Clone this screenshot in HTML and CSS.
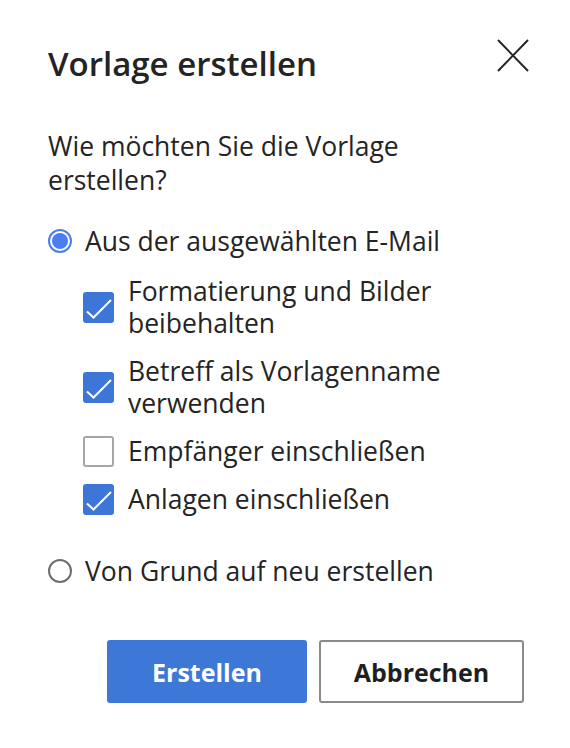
FILE: index.html
```html
<!DOCTYPE html>
<html lang="de">
<head>
<meta charset="utf-8">
<link rel="stylesheet" href="styles.css">
</head>
<body>
<div class="dialog">
  <div class="header">
    <h1 class="title">Vorlage erstellen</h1>
    <button class="close" aria-label="Schließen">
      <svg width="32" height="33" viewBox="0 0 32 33"><path d="M1 1 L31 32 M31 1 L1 32" stroke="#242424" stroke-width="2" fill="none"/></svg>
    </button>
  </div>
  <p class="question">Wie möchten Sie die Vorlage erstellen?</p>
  <div class="options">
    <div class="radio-row">
      <span class="radio checked"><span class="dot"></span></span>
      <span class="label">Aus der ausgewählten E-Mail</span>
    </div>
    <div class="checks">
      <div class="check-row">
        <span class="box checked"><svg width="31" height="31" viewBox="0 0 31 31"><path d="M4 19.5 L10.5 25.5 L28 8" stroke="#fff" stroke-width="2" fill="none"/></svg></span>
        <span class="label">Formatierung und Bilder beibehalten</span>
      </div>
      <div class="check-row">
        <span class="box checked"><svg width="31" height="31" viewBox="0 0 31 31"><path d="M4 19.5 L10.5 25.5 L28 8" stroke="#fff" stroke-width="2" fill="none"/></svg></span>
        <span class="label">Betreff als Vorlagenname verwenden</span>
      </div>
      <div class="check-row">
        <span class="box"></span>
        <span class="label">Empfänger einschließen</span>
      </div>
      <div class="check-row">
        <span class="box checked"><svg width="31" height="31" viewBox="0 0 31 31"><path d="M4 19.5 L10.5 25.5 L28 8" stroke="#fff" stroke-width="2" fill="none"/></svg></span>
        <span class="label">Anlagen einschließen</span>
      </div>
    </div>
    <div class="radio-row second">
      <span class="radio"></span>
      <span class="label">Von Grund auf neu erstellen</span>
    </div>
  </div>
  <div class="actions">
    <button class="btn primary">Erstellen</button>
    <button class="btn secondary">Abbrechen</button>
  </div>
</div>
</body>
</html>
```
FILE: styles.css
```css
html, body {
  margin: 0;
  padding: 0;
  background: #ffffff;
}
body {
  font-family: "Open Sans", "Noto Sans", sans-serif;
  color: #242424;
}
.dialog {
  width: 570px;
  box-sizing: border-box;
  padding: 44px 41px 0 48px;
}
.header {
  display: flex;
  justify-content: space-between;
  align-items: flex-start;
}
.title {
  margin: 0;
  font-size: 33px;
  line-height: 40px;
  font-weight: 600;
}
.close {
  margin-top: -5px;
  border: 0;
  background: none;
  padding: 0;
  width: 32px;
  height: 33px;
  display: block;
}
.close svg { display: block; }
.question {
  margin: 45px 0 0;
  font-size: 26.5px;
  line-height: 34px;
  width: 400px;
}
.options {
  margin-top: 27px;
}
.radio-row {
  display: flex;
  align-items: center;
  gap: 13px;
  height: 34px;
}
.radio-row .label {
  font-size: 26.5px;
  line-height: 34px;
  white-space: nowrap;
}
.radio-row.second {
  margin-top: 39px;
}
.radio {
  width: 24px;
  height: 24px;
  box-sizing: border-box;
  border-radius: 50%;
  border: 2px solid #6e6e6e;
  display: flex;
  align-items: center;
  justify-content: center;
  flex: none;
}
.radio.checked {
  border-color: #4a7cf3;
}
.radio .dot {
  width: 16px;
  height: 16px;
  border-radius: 50%;
  background: #4a7cf3;
}
.checks {
  margin-top: 17px;
  padding-left: 35px;
  display: flex;
  flex-direction: column;
  gap: 16px;
}
.check-row {
  display: flex;
  align-items: center;
  gap: 14px;
}
.check-row .label {
  font-size: 26.5px;
  line-height: 32px;
  width: 360px;
}
.box {
  width: 31px;
  height: 31px;
  box-sizing: border-box;
  border-radius: 3px;
  border: 2px solid #a6a6a6;
  flex: none;
  position: relative;
}
.box.checked {
  background: #3d76d6;
  border-color: #3d76d6;
}
.box svg {
  display: block;
  position: absolute;
  left: -2px;
  top: -2px;
}
.actions {
  margin-top: 52px;
  display: flex;
  justify-content: flex-end;
  gap: 12px;
  padding-right: 5px;
}
.btn {
  height: 63px;
  border-radius: 3px;
  font-family: "Open Sans", "Noto Sans", sans-serif;
  font-size: 25px;
  font-weight: 700;
  padding: 0;
  box-sizing: border-box;
}
.btn.primary {
  width: 200px;
  background: #3d78d6;
  color: #ffffff;
  border: 0;
}
.btn.secondary {
  width: 205px;
  background: #ffffff;
  color: #1f1f1f;
  border: 2px solid #8a8a8a;
}
```
